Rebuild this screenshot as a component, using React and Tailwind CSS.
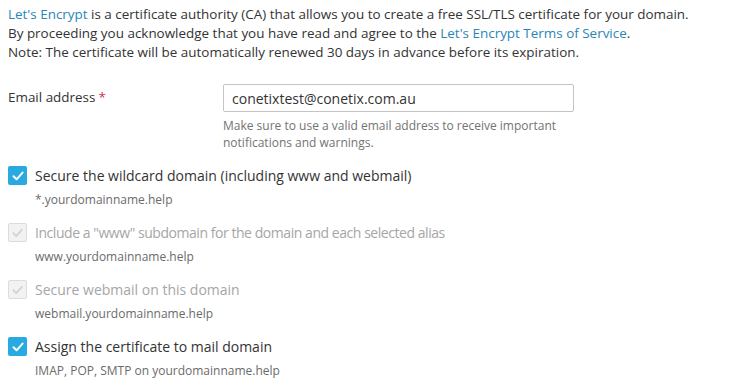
import React, { useState } from "react";

const Check = ({ color }) => (
    <svg viewBox="0 0 18 18" className="w-[18px] h-[18px]">
        <path d="M4.5 9.2 L7.6 12.3 L13.6 5.6" fill="none" stroke={color} strokeWidth="2" strokeLinecap="round" strokeLinejoin="round" />
    </svg>
);

const Option = ({ checked, disabled, label, hint, onToggle, tight }) => (
    <div className="flex flex-col">
        <label className="flex items-center gap-[8px] h-[19px] cursor-pointer">
            <span
                onClick={disabled ? undefined : onToggle}
                className={`w-[19px] h-[19px] rounded-[2px] flex items-center justify-center ${
                    disabled
                        ? "bg-[#f2f2f2] border border-[#dcdcdc]"
                        : checked
                        ? "bg-[#28a9e0]"
                        : "bg-white border border-[#b5b5b5]"
                }`}
            >
                {(checked || disabled) && <Check color={disabled ? "#d4d4d4" : "#ffffff"} />}
            </span>
            <span
                className={`text-[14px] ${disabled ? "text-[#a6a6a6]" : "text-[#333]"} ${
                    tight ? "tracking-[-0.45px]" : ""
                }`}
            >
                {label}
            </span>
        </label>
        <div className="pl-[27px] mt-[6px] text-[12px] leading-[17px] text-[#6b6b6b]">{hint}</div>
    </div>
);

export default function App() {
    const [email, setEmail] = useState("conetixtest@conetix.com.au");
    const [wildcard, setWildcard] = useState(true);
    const [mail, setMail] = useState(true);

    return (
        <div className="w-[736px] h-[392px] bg-white px-[8px] pt-[5px] text-[#333] font-['Open_Sans',sans-serif] text-[13.45px] leading-[19px]">
            {/* Intro */}
            <p>
                <span className="text-[#2a85b5]">Let's Encrypt</span> is a certificate authority (CA) that allows you to create a free SSL/TLS certificate for your domain.
                <br />
                By proceeding you acknowledge that you have read and agree to the{" "}
                <span className="text-[#2a85b5]">Let's Encrypt Terms of Service</span>.
                <br />
                Note: The certificate will be automatically renewed 30 days in advance before its expiration.
            </p>

            {/* Email */}
            <div className="flex mt-[22px]">
                <div className="w-[215px] pt-[4px]">
                    Email address<span className="text-[#d0314f] ml-[3px]">*</span>
                </div>
                <div className="flex flex-col">
                    <input
                        value={email}
                        onChange={(e) => setEmail(e.target.value)}
                        className="w-[351px] h-[28px] border border-[#c4c4c4] rounded-[2px] px-[8px] text-[14px] text-[#333] outline-none"
                    />
                    <div className="mt-[5px] text-[12px] leading-[17px] text-[#737373] w-[350px]">
                        Make sure to use a valid email address to receive important notifications and warnings.
                    </div>
                </div>
            </div>

            {/* Options */}
            <div className="flex flex-col gap-[15px] mt-[15px]">
                <Option
                    checked={wildcard}
                    onToggle={() => setWildcard(!wildcard)}
                    label="Secure the wildcard domain (including www and webmail)"
                    hint="*.yourdomainname.help"
                />
                <Option
                    disabled
                    tight
                    label={'Include a "www" subdomain for the domain and each selected alias'}
                    hint="www.yourdomainname.help"
                />
                <Option disabled label="Secure webmail on this domain" hint="webmail.yourdomainname.help" />
                <Option
                    checked={mail}
                    onToggle={() => setMail(!mail)}
                    label="Assign the certificate to mail domain"
                    hint="IMAP, POP, SMTP on yourdomainname.help"
                />
            </div>
        </div>
    );
}
